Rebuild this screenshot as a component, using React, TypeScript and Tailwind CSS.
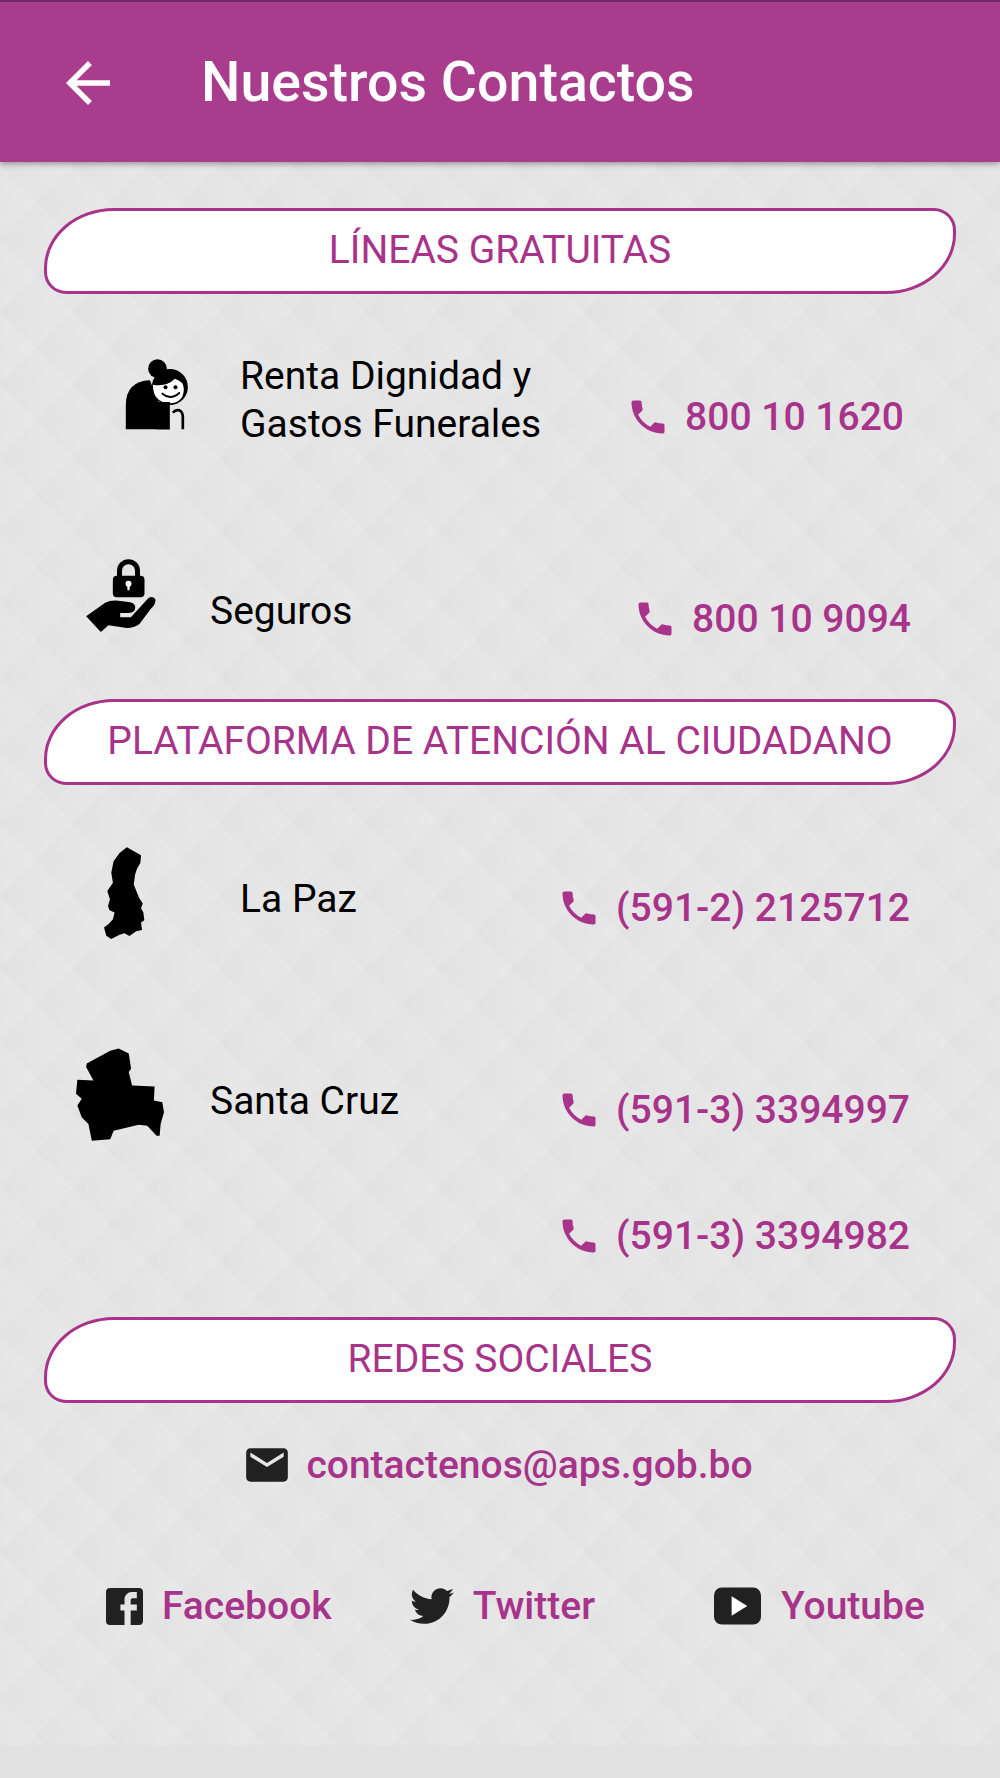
import { FaTwitter } from "react-icons/fa";
import { MdArrowBack, MdEmail, MdPhone } from "react-icons/md";

const Pill = ({ label }: { label: string }) => (
  <div className="-mx-[1px] flex h-[86px] items-center justify-center rounded-tl-[70px_60px] rounded-tr-[22px] rounded-br-[70px_60px] rounded-bl-[22px] border-[3px] border-[#a8338a] bg-white pb-[2px] text-[39px] text-[#a8338a]">
    {label}
  </div>
);

const Phone = ({ number, className = "" }: { number: string; className?: string }) => (
  <div className={`flex h-[44px] items-center justify-end font-medium text-[39px] text-[#a8338a] ${className}`}>
    <MdPhone className="mr-[15px] h-[44px] w-[44px]" />
    {number}
  </div>
);

const GrandmaIcon = () => (
  <svg viewBox="190 45 200 225" className="h-[75px] w-[67px]">
    <circle cx="293" cy="80" r="28" fill="#000" />
    <path d="M198 262V190Q198 118 270 115L330 262Z" fill="#000" />
    <circle cx="330" cy="135" r="54" fill="#000" />
    <path d="M279 128Q320 135 345 110Q372 118 372 140Q372 182 330 184Q280 182 279 128Z" fill="#fff" />
    <rect x="290" y="180" width="40" height="82" fill="#000" />
    <circle cx="317" cy="136" r="6" fill="#000" />
    <circle cx="347" cy="136" r="6" fill="#000" />
    <path d="M308 155Q332 176 358 153" fill="none" stroke="#000" strokeWidth="6" strokeLinecap="round" />
    <path d="M339 212Q348 202 358 205Q369 210 369 225V262" fill="none" stroke="#000" strokeWidth="8" />
  </svg>
);

const HandLockIcon = () => (
  <svg viewBox="75 650 215 225" className="h-[75px] w-[72px]">
    <path d="M178 708V688A27 27 0 0 1 232 688V708" fill="none" stroke="#000" strokeWidth="15" />
    <rect x="158" y="703" width="95" height="65" rx="12" fill="#000" />
    <circle cx="205" cy="727" r="9" fill="#fff" />
    <path d="M201 730H209L208 747H202Z" fill="#fff" />
    <path
      d="M78 825L135 784Q150 776 175 778L210 783Q230 788 224 806Q218 815 205 815L180 815L180 828L212 828L265 770Q280 762 286 775Q286 790 272 802L238 848Q222 860 200 860L145 852L122 872Z"
      fill="#000"
    />
  </svg>
);

const LaPazMap = () => (
  <svg viewBox="125 45 130 285" className="h-[95px] w-[43px]">
    <polygon
      points="197,48 240,72 238,95 228,112 222,130 218,160 228,185 234,200 245,218 240,232 247,245 250,268 240,275 243,298 225,302 205,316 190,308 175,312 150,325 135,315 128,290 142,280 155,265 160,245 145,238 140,225 146,205 138,180 155,155 150,125 157,90 175,65"
      fill="#000"
    />
  </svg>
);

const BoliviaMap = () => (
  <svg viewBox="45 652 268 280" className="h-[95px] w-[90px]">
    <polygon
      points="175,655 205,670 212,715 205,725 215,765 282,768 280,810 305,815 310,845 300,880 297,915 288,915 260,885 235,882 160,900 150,925 95,930 85,880 65,860 52,825 65,805 48,790 52,748 100,750 78,710 80,700 150,662"
      fill="#000"
    />
  </svg>
);

const Social = ({ icon, label, className = "" }: { icon: React.ReactNode; label: string; className?: string }) => (
  <div className={`flex items-center font-medium text-[#a8338a] ${className}`}>
    {icon}
    {label}
  </div>
);

export default function App() {
  return (
    <div className="flex min-h-[1778px] w-[1000px] flex-col bg-[#e2e2e2] font-['Roboto',sans-serif]">
      <header className="relative z-10 flex h-[162px] items-center border-t-2 border-[#6f2a68] bg-[#aa3c8d] pt-[2px] text-white shadow-[0_2px_6px_rgba(0,0,0,0.35)]">
        <MdArrowBack className="ml-[55px] h-[66px] w-[66px]" />
        <h1 className="ml-[80px] text-[55.5px] font-medium">Nuestros Contactos</h1>
      </header>

      <main className="h-[1583px] bg-[#e2e2e2] bg-[repeating-linear-gradient(45deg,rgba(255,255,255,0)_0px,rgba(255,255,255,0.12)_51.6px),repeating-linear-gradient(135deg,rgba(255,255,255,0)_0px,rgba(255,255,255,0.12)_51.6px)] bg-[size:73px_73px] bg-[position:0px_3.5px] px-[45px] pt-[46px] text-black">
        <Pill label="LÍNEAS GRATUITAS" />

        <div className="flex h-[236px] items-start">
          <div className="ml-[78px] mt-[63px]">
            <GrandmaIcon />
          </div>
          <p className="ml-[50px] mt-[58px] text-[39px] leading-[48px]">
            Renta Dignidad y
            <br />
            Gastos Funerales
          </p>
          <Phone number="800 10 1620" className="ml-auto mr-[51px] mt-[101px]" />
        </div>

        <div className="flex h-[169px] items-start">
          <div className="ml-[40px] mt-[28px]">
            <HandLockIcon />
          </div>
          <p className="ml-[53px] mt-[60px] text-[39px] leading-[42px]">Seguros</p>
          <Phone number="800 10 9094" className="ml-auto mr-[44px] mt-[67px]" />
        </div>

        <Pill label="PLATAFORMA DE ATENCIÓN AL CIUDADANO" />

        <div className="flex h-[235px] items-start">
          <div className="ml-[58px] mt-[61px]">
            <LaPazMap />
          </div>
          <p className="ml-[94px] mt-[93px] text-[39px] leading-[42px]">La Paz</p>
          <Phone number="(591-2) 2125712" className="ml-auto mr-[45px] mt-[101px]" />
        </div>

        <div className="flex h-[297px] items-start">
          <div className="ml-[30px] mt-[27px]">
            <BoliviaMap />
          </div>
          <p className="ml-[45px] mt-[60px] text-[39px] leading-[42px]">Santa Cruz</p>
          <div className="ml-auto mr-[45px] mt-[68px] flex flex-col gap-[82px]">
            <Phone number="(591-3) 3394997" />
            <Phone number="(591-3) 3394982" />
          </div>
        </div>

        <Pill label="REDES SOCIALES" />

        <div className="mt-[40px] flex h-[44px] items-center justify-center pr-[5px] text-[39px] font-medium text-[#a8338a]">
          <MdEmail className="mr-[14px] h-[50px] w-[50px] text-[#212121]" />
          contactenos@aps.gob.bo
        </div>

        <div className="mt-[97px] flex h-[44px] text-[39px]">
          <Social
            icon={
              <svg viewBox="3 3 18 18" className="mr-[19px] h-[37px] w-[37px]">
                <path
                  d="M5,3H19A2,2 0 0,1 21,5V19A2,2 0 0,1 19,21H5A2,2 0 0,1 3,19V5A2,2 0 0,1 5,3M18,5H15.5A3.5,3.5 0 0,0 12,8.5V11H10V14H12V21H15V14H18V11H15V9A1,1 0 0,1 16,8H18V5Z"
                  fill="#212121"
                />
              </svg>
            }
            label="Facebook"
            className="ml-[61px]"
          />
          <Social
            icon={<FaTwitter className="mr-[19px] h-[44px] w-[44px] text-[#212121]" />}
            label="Twitter"
            className="ml-[78px]"
          />
          <Social
            icon={
              <svg viewBox="0 0 48 38" className="mr-[20px] h-[38px] w-[47px]">
                <rect width="48" height="38" rx="8" fill="#212121" />
                <path d="M18 9L34 19L18 29Z" fill="#fff" />
              </svg>
            }
            label="Youtube"
            className="ml-[119px]"
          />
        </div>
      </main>
    </div>
  );
}
